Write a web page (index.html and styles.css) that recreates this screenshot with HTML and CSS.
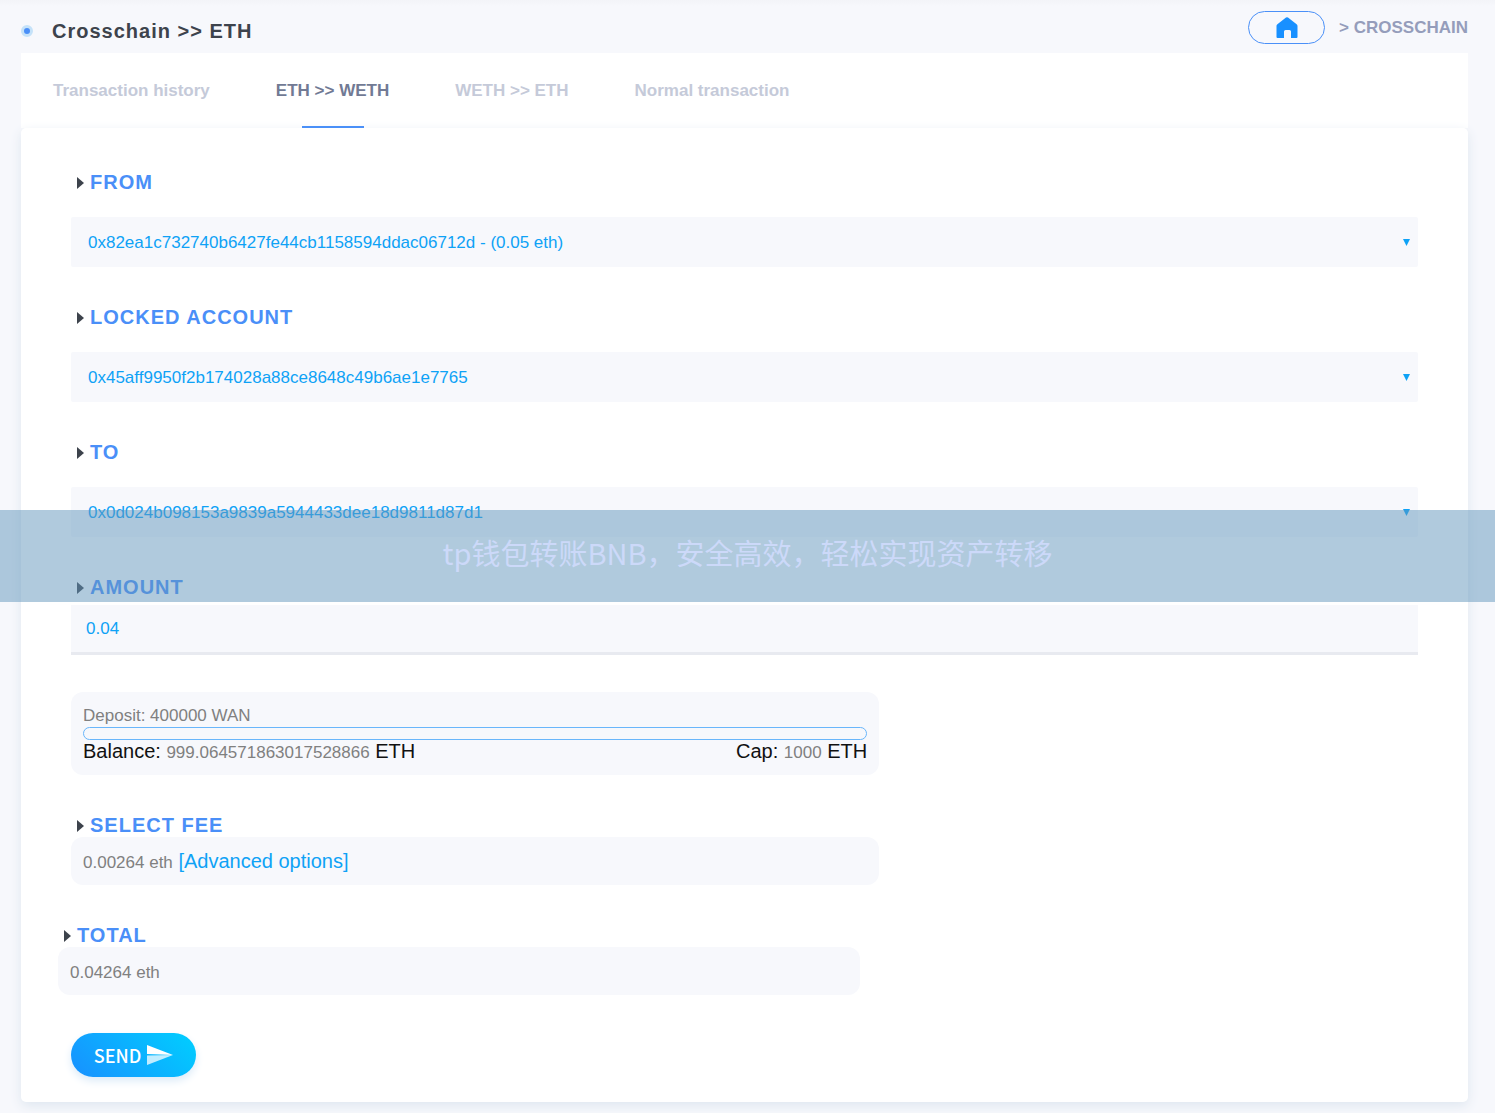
FILE: index.html
```html
<!DOCTYPE html>
<html lang="en">
<head>
<meta charset="utf-8">
<meta name="viewport" content="width=device-width, initial-scale=1">
<title>Crosschain - ETH</title>
<link rel="stylesheet" href="styles.css">
</head>
<body>
<header class="topbar">
  <h1 class="title"><span class="dot"></span>Crosschain &gt;&gt; ETH</h1>
  <nav class="crumbs" aria-label="Breadcrumb">
    <a class="home" href="#" aria-label="Home">
      <svg width="22" height="22" viewBox="0 0 22 22" aria-hidden="true"><path fill="#1890ff" d="M10 .6Q11 0 12 .6L20.600 7.200Q21.500 7.900 21.500 9V20Q21.500 21 20.500 21H15V14.500Q15 13 13.500 13H9.500Q8 13 8 14.500V21H1.500Q.5 21 .5 20V9Q.5 7.900 1.400 7.200Z"/></svg>
    </a>
    <span>&gt; CROSSCHAIN</span>
  </nav>
</header>
<main class="page">
  <nav class="tabs">
    <a class="tab" href="#">Transaction history</a>
    <a class="tab active" href="#" aria-current="page">ETH &gt;&gt; WETH</a>
    <a class="tab" href="#">WETH &gt;&gt; ETH</a>
    <a class="tab" href="#">Normal transaction</a>
  </nav>
  <form class="panel">
    <div class="field">
      <label class="label" for="from">FROM</label>
      <div class="select"><select id="from"><option>0x82ea1c732740b6427fe44cb1158594ddac06712d - (0.05 eth)</option></select></div>
    </div>
    <div class="field">
      <label class="label" for="locked">LOCKED ACCOUNT</label>
      <div class="select"><select id="locked"><option>0x45aff9950f2b174028a88ce8648c49b6ae1e7765</option></select></div>
    </div>
    <div class="field">
      <label class="label" for="to">TO</label>
      <div class="select"><select id="to"><option>0x0d024b098153a9839a5944433dee18d9811d87d1</option></select></div>
    </div>
    <div class="field amount">
      <label class="label" for="amount">AMOUNT</label>
      <input id="amount" type="text" value="0.04">
    </div>
    <section class="box quota">
      <div class="small">Deposit: 400000 WAN</div>
      <div class="bar"></div>
      <div class="limits">
        <span>Balance: <span class="small">999.064571863017528866</span> ETH</span>
        <span>Cap: <span class="small">1000</span> ETH</span>
      </div>
    </section>
    <section class="group">
      <h2 class="label">SELECT FEE</h2>
      <div class="box"><span class="small">0.00264 eth</span> <a href="#">[Advanced options]</a></div>
    </section>
    <section class="group total">
      <h2 class="label">TOTAL</h2>
      <div class="box"><span class="small">0.04264 eth</span></div>
    </section>
    <button class="send" type="submit">SEND
      <svg width="26" height="20" viewBox="0 0 26 20" aria-hidden="true"><path fill="#fff" d="M0 0 26 10 0 9Z"/><path fill="#fff" fill-opacity=".75" d="M0 10.500 26 10 0 20Z"/></svg>
    </button>
  </form>
</main>
<div class="banner" lang="zh-CN">tp钱包转账BNB，安全高效，轻松实现资产转移</div>
</body>
</html>
```
FILE: styles.css
```css
* { box-sizing: border-box; }
body {
  margin: 0;
  padding: 0 27px 12px 21px;
  position: relative;
  background: #f7f8fc linear-gradient(#f3f4f8, #f7f8fc) top / 100% 6px no-repeat;
  font: 20px/24px "Liberation Sans", Arial, sans-serif;
  color: #111;
}
a { text-decoration: none; color: #0ea2f6; }

.topbar { display: flex; justify-content: space-between; height: 53px; }
.title {
  display: flex; align-items: center; gap: 19px;
  margin: 0; padding-top: 9px;
  font-size: 20px; letter-spacing: 1px; color: #3d434c;
}
.dot {
  width: 12px; height: 12px; border-radius: 50%;
  background: #4a8ff8; border: 3px solid #c5e2f9;
}
.crumbs {
  display: flex; align-items: center; gap: 14px;
  padding-top: 2px;
  font-size: 17px; font-weight: bold; color: #959dbb;
}
.home {
  display: flex; align-items: center; justify-content: center;
  width: 77px; height: 33px;
  border: 1px solid #4a90f8; border-radius: 17px;
}

.tabs { display: flex; gap: 66px; height: 75px; padding: 0 32px; background: #fff; }
.tab {
  position: relative; display: flex; align-items: center;
  font-size: 17px; font-weight: bold; color: #c5cad9;
}
.tab.active { color: #717a94; }
.tab.active::after {
  content: ""; position: absolute; bottom: 0; left: 50%;
  width: 62px; height: 2px; margin-left: -31px; background: #4a90f8;
}

.panel {
  padding: 42px 50px 25px;
  background: #fff; border-radius: 5px;
  box-shadow: 0 4px 12px #dfe7f0;
}
.label {
  display: flex; align-items: center; gap: 6px;
  margin: 0; padding-left: 6px;
  font-size: 20px; line-height: 24px; font-weight: bold; letter-spacing: 1px;
  color: #4a8ff8;
}
.label::before {
  content: ""; width: 7px; height: 12px; margin-top: 2px;
  background: #3d434c; clip-path: polygon(0 0, 100% 50%, 0 100%);
}
.field { display: grid; gap: 23px; margin-bottom: 38px; }
.select { position: relative; }
.select::after {
  content: ""; position: absolute; right: 8px; top: 22px;
  width: 7px; height: 7px; pointer-events: none;
  background: #0ea2f6; clip-path: polygon(0 0, 100% 0, 50% 100%);
}
select, input {
  display: block; width: 100%; height: 50px; margin: 0;
  padding: 1px 17px 0; border: 0; border-radius: 2px;
  appearance: none; background: #f7f8fc;
  font: 17px "Liberation Sans", Arial, sans-serif; color: #0ea2f6;
}
.amount { gap: 6px; margin-bottom: 37px; }
.amount input { padding: 0 15px; border-bottom: 3px solid #e8eaf0; border-radius: 0; }

.box { width: 60%; padding: 12px; border-radius: 12px; background: #f7f8fc; }
.small { font-size: 17px; line-height: 20px; color: gray; }
.quota { margin-bottom: 38px; }
.quota > .small { line-height: 24px; }
.bar { height: 13px; margin-top: -1px; border: 1px solid #69b6fb; border-radius: 7px; }
.limits { display: flex; justify-content: space-between; line-height: 23px; }
.group { margin-bottom: 38px; }
.total { margin-left: -13px; }
.total .box { width: 59%; }

.send {
  display: flex; align-items: center; justify-content: center; gap: 6px;
  width: 125px; height: 44px; padding: 0; border: 0; border-radius: 22px;
  background: linear-gradient(45deg, #1890ff, #00cfff);
  box-shadow: 0 4px 8px #dcebf8;
  font: 500 18px/24px "Noto Sans CJK SC", sans-serif; color: #fff;
}

.banner {
  position: absolute; left: 0; right: 0; top: 510px;
  height: 92px; padding-bottom: 8px;
  display: flex; align-items: center; justify-content: center;
  background: rgba(97, 149, 187, .5);
  font: 400 29px/44px "Noto Sans CJK SC", sans-serif; color: #ccd9f9;
}
```
